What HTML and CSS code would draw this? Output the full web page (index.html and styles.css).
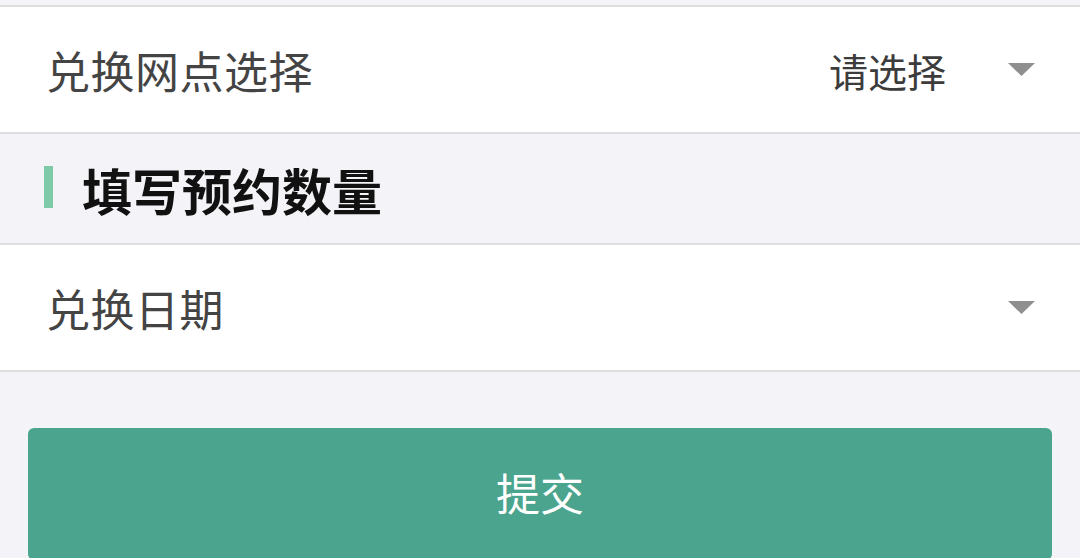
FILE: index.html
```html
<!DOCTYPE html>
<html lang="zh-CN">
<head>
<meta charset="utf-8">
<link rel="stylesheet" href="styles.css">
</head>
<body>
<div class="page">
  <div class="row row-first">
    <span class="label">兑换网点选择</span>
    <span class="right">
      <span class="value">请选择</span>
      <svg class="caret" width="27" height="13" viewBox="0 0 27 13"><polygon points="0,0 27,0 13.5,13" fill="#8f8f8f"/></svg>
    </span>
  </div>
  <div class="section">
    <span class="bar"></span>
    <span class="title">填写预约数量</span>
  </div>
  <div class="row">
    <span class="label">兑换日期</span>
    <span class="right">
      <svg class="caret" width="27" height="13" viewBox="0 0 27 13"><polygon points="0,0 27,0 13.5,13" fill="#8f8f8f"/></svg>
    </span>
  </div>
  <div class="actions">
    <button class="submit">提交</button>
  </div>
</div>
</body>
</html>
```
FILE: styles.css
```css
html, body {
  margin: 0;
  padding: 0;
  background: #f4f4f8;
  font-family: "Noto Sans CJK SC", "Noto Sans", sans-serif;
}
.page {
  padding-top: 5px;
  height: 553px;
  overflow: hidden;
}
.row {
  display: flex;
  align-items: center;
  justify-content: space-between;
  height: 125px;
  background: #fff;
  border-top: 2px solid #dedede;
  border-bottom: 2px solid #dedede;
  padding: 0 45px 0 46px;
}
.label {
  font-size: 44px;
  color: #444;
  letter-spacing: 0.5px;
}
.right {
  display: flex;
  align-items: center;
}
.value {
  font-size: 39px;
  color: #3c3c3c;
  margin-right: 62px;
}
.caret {
  display: block;
}
.section {
  display: flex;
  align-items: center;
  height: 109px;
  padding-left: 44px;
}
.bar {
  width: 9px;
  height: 42px;
  background: #7ecaa8;
  margin-right: 29px;
  margin-top: -4px;
}
.title {
  font-size: 50px;
  font-weight: 700;
  color: #111;
}
.actions {
  padding: 56px 28px 0 28px;
}
.submit {
  display: block;
  width: 100%;
  height: 132px;
  border: none;
  border-radius: 6px;
  background: #4ba48d;
  color: #fff;
  font-family: "Noto Sans CJK SC", "Noto Sans", sans-serif;
  font-size: 44px;
  padding: 0 0 4px 0;
}
```
